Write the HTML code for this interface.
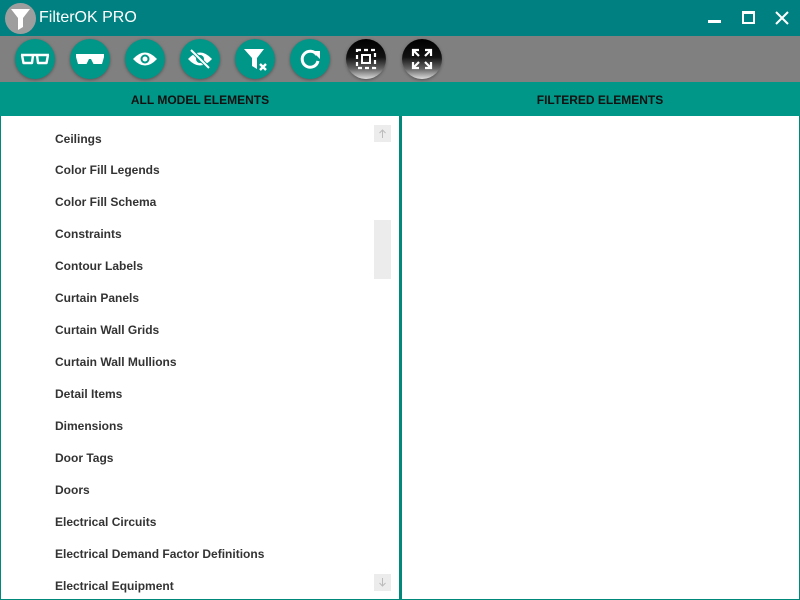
<!DOCTYPE html>
<html><head><style>
*{margin:0;padding:0;box-sizing:border-box}
body{width:800px;height:600px;overflow:hidden;background:#fff;font-family:"Liberation Sans",sans-serif;position:relative}
.title{position:absolute;left:0;top:0;width:800px;height:36px;background:#008080}
.title .t{position:absolute;left:39px;top:9px;color:#fff;font-size:16px}
.logo{position:absolute;left:5px;top:3px;width:31px;height:31px;border-radius:50%;background:#9e9e9e}
.tool{position:absolute;left:0;top:36px;width:800px;height:46px;background:#808080}
.b{position:absolute;top:3px;width:40px;height:40px;border-radius:50%;background:#009688;box-shadow:0 1px 3px rgba(0,0,0,.35)}
.b svg{position:absolute;left:0;top:0}
.bk{background:linear-gradient(#000 0%,#111 45%,#666 75%,#ddd 100%)}
.hdr{position:absolute;top:82px;height:34px;background:#009688;font-size:12px;font-weight:bold;color:#111;text-align:center;line-height:36px}
.panel{position:absolute;top:116px;height:484px;background:#fff;border:solid #00897b}
.item{position:absolute;left:55px;font-size:12px;font-weight:bold;color:#333}
.sb{position:absolute;background:#ececec}
</style></head><body>
<div class="title">
<div class="logo"><svg width="31" height="31"><path d="M6 6h19l-7 9v9l-5 3V15z" fill="#fff"/></svg></div>
<div class="t">FilterOK PRO</div>
<div style="position:absolute;left:708px;top:20px;width:13px;height:3px;background:#fff"></div>
<div style="position:absolute;left:742px;top:11px;width:13px;height:13px;border:2px solid #fff;border-top-width:3px"></div>
<svg style="position:absolute;left:775px;top:11px" width="14" height="14"><path d="M1 1L13 13M13 1L1 13" stroke="#fff" stroke-width="2"/></svg>
</div>
<div class="tool">
<div class="b" style="left:15px"><svg width="40" height="40"><path d="M6 16h28M7 16l1.5 8h8.5l1-8M22 16l1 8h8.5l1.5-8" stroke="#fff" stroke-width="2.4" fill="none" stroke-linejoin="round"/></svg></div>
<div class="b" style="left:70px"><svg width="40" height="40"><path d="M6 15h28v3l-2 7h-8.5l-2.5-5h-2l-2.5 5h-8.5l-2-7z" fill="#fff"/></svg></div>
<div class="b" style="left:125px"><svg width="40" height="40"><path d="M8 20q12-13 24 0q-12 13-24 0z" fill="#fff"/><circle cx="20" cy="20" r="4.5" fill="#009688"/><circle cx="20" cy="20" r="2.5" fill="#fff"/></svg></div>
<div class="b" style="left:180px"><svg width="40" height="40"><path d="M8 20q12-13 24 0q-12 13-24 0z" fill="#fff"/><circle cx="20" cy="20" r="4" fill="#009688"/><path d="M11 11L29 29" stroke="#009688" stroke-width="4"/><path d="M11 11L29 29" stroke="#fff" stroke-width="2"/></svg></div>
<div class="b" style="left:235px"><svg width="40" height="40"><path d="M9 10h20l-7 9v11l-5-3v-8z" fill="#fff"/><path d="M25 25l6 6M31 25l-6 6" stroke="#fff" stroke-width="2.4"/></svg></div>
<div class="b" style="left:290px"><svg width="40" height="40"><path d="M27 16a8 8 0 1 0 1 6" stroke="#fff" stroke-width="3" fill="none"/><path d="M22 12h8v8z" fill="#fff"/></svg></div>
<div class="b bk" style="left:346px"><svg width="40" height="40"><rect x="11" y="11" width="18" height="18" stroke="#fff" stroke-width="2.2" fill="none" stroke-dasharray="4 3"/><rect x="16" y="16" width="8" height="8" stroke="#fff" stroke-width="2" fill="none"/></svg></div>
<div class="b bk" style="left:402px"><svg width="40" height="40"><path d="M11 17v-6h6M11 11l6 6M29 17v-6h-6M29 11l-6 6M11 23v6h6M11 29l6-6M29 23v6h-6M29 29l-6-6" stroke="#fff" stroke-width="2.2" fill="none"/></svg></div>
</div>
<div class="hdr" style="left:0;width:400px">ALL MODEL ELEMENTS</div>
<div class="hdr" style="left:400px;width:400px">FILTERED ELEMENTS</div>
<div class="panel" style="left:0;width:401px;border-width:0 2px 1px 1px"></div>
<div class="panel" style="left:400px;width:400px;border-width:0 1px 1px 2px"></div>
<div class="sb" style="left:374px;top:125px;width:17px;height:17px"></div>
<div class="sb" style="left:374px;top:220px;width:17px;height:59px"></div>
<div class="sb" style="left:374px;top:574px;width:17px;height:17px"></div>
<svg style="position:absolute;left:378px;top:129px" width="9" height="9"><path d="M4.5 1v8M1.5 4l3-3 3 3" stroke="#bbb" fill="none"/></svg>
<svg style="position:absolute;left:378px;top:578px" width="9" height="9"><path d="M4.5 0v8M1.5 5l3 3 3-3" stroke="#bbb" fill="none"/></svg>
<div class="item" style="top:132px">Ceilings</div>
<div class="item" style="top:163px">Color Fill Legends</div>
<div class="item" style="top:195px">Color Fill Schema</div>
<div class="item" style="top:227px">Constraints</div>
<div class="item" style="top:259px">Contour Labels</div>
<div class="item" style="top:291px">Curtain Panels</div>
<div class="item" style="top:323px">Curtain Wall Grids</div>
<div class="item" style="top:355px">Curtain Wall Mullions</div>
<div class="item" style="top:387px">Detail Items</div>
<div class="item" style="top:419px">Dimensions</div>
<div class="item" style="top:451px">Door Tags</div>
<div class="item" style="top:483px">Doors</div>
<div class="item" style="top:515px">Electrical Circuits</div>
<div class="item" style="top:547px">Electrical Demand Factor Definitions</div>
<div class="item" style="top:579px">Electrical Equipment</div>
</body></html>
